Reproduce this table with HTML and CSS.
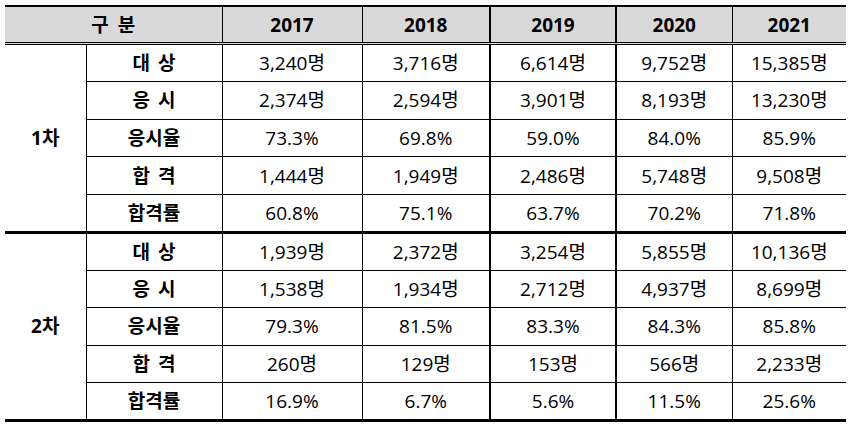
FILE: index.html
```html
<!DOCTYPE html>
<html lang="ko">
<head>
<meta charset="utf-8">
<link rel="stylesheet" href="styles.css">
</head>
<body>
<table class="stats">
  <colgroup>
    <col class="c-group"><col class="c-label"><col class="c-y1"><col class="c-y2"><col class="c-y3"><col class="c-y4"><col class="c-y5">
  </colgroup>
  <thead>
    <tr>
      <th colspan="2">구 분</th>
      <th>2017</th><th>2018</th><th class="thick">2019</th><th class="thick">2020</th><th>2021</th>
    </tr>
  </thead>
  <tbody class="g1">
    <tr><th rowspan="5" class="group">1차</th><th class="lab">대 상</th><td>3,240명</td><td>3,716명</td><td class="thick">6,614명</td><td class="thick">9,752명</td><td>15,385명</td></tr>
    <tr><th class="lab">응 시</th><td>2,374명</td><td>2,594명</td><td class="thick">3,901명</td><td class="thick">8,193명</td><td>13,230명</td></tr>
    <tr><th class="lab">응시율</th><td>73.3%</td><td>69.8%</td><td class="thick">59.0%</td><td class="thick">84.0%</td><td>85.9%</td></tr>
    <tr><th class="lab">합 격</th><td>1,444명</td><td>1,949명</td><td class="thick">2,486명</td><td class="thick">5,748명</td><td>9,508명</td></tr>
    <tr><th class="lab">합격률</th><td>60.8%</td><td>75.1%</td><td class="thick">63.7%</td><td class="thick">70.2%</td><td>71.8%</td></tr>
  </tbody>
  <tbody class="g2">
    <tr><th rowspan="5" class="group">2차</th><th class="lab">대 상</th><td>1,939명</td><td>2,372명</td><td class="thick">3,254명</td><td class="thick">5,855명</td><td>10,136명</td></tr>
    <tr><th class="lab">응 시</th><td>1,538명</td><td>1,934명</td><td class="thick">2,712명</td><td class="thick">4,937명</td><td>8,699명</td></tr>
    <tr><th class="lab">응시율</th><td>79.3%</td><td>81.5%</td><td class="thick">83.3%</td><td class="thick">84.3%</td><td>85.8%</td></tr>
    <tr><th class="lab">합 격</th><td>260명</td><td>129명</td><td class="thick">153명</td><td class="thick">566명</td><td>2,233명</td></tr>
    <tr><th class="lab">합격률</th><td>16.9%</td><td>6.7%</td><td class="thick">5.6%</td><td class="thick">11.5%</td><td>25.6%</td></tr>
  </tbody>
</table>
</body>
</html>
```

FILE: styles.css
```css
html, body {
  margin: 0;
  padding: 0;
  background: #ffffff;
}
body {
  padding: 5px;
  font-family: "Open Sans", "Noto Sans CJK KR", sans-serif;
  color: #000;
}
.stats {
  border-collapse: collapse;
  width: 841px;
  table-layout: fixed;
  font-size: 19px;
}
.c-group { width: 81px; }
.c-label { width: 136px; }
.c-y1 { width: 140px; }
.c-y2 { width: 128px; }
.c-y3 { width: 126px; }
.c-y4 { width: 116px; }
.c-y5 { width: 114px; }

.stats th, .stats td {
  padding: 0;
  text-align: center;
  vertical-align: middle;
  border-left: 1px solid #000;
  line-height: 22px;
}
.stats thead th {
  background: #d9d9d9;
  font-weight: 700;
  height: 35px;
  border-top: 2px solid #000;
  border-bottom: 3px double #000;
}
.stats thead th:first-child {
  border-left: none;
  word-spacing: 4px;
}
.stats .thick { border-left: 2px solid #000; }
.stats tbody td, .stats tbody .lab {
  border-bottom: 1px solid #000;
  font-weight: 400;
}
.stats tbody .lab {
  font-weight: 700;
  word-spacing: 3px;
}
.stats .group {
  border-left: none;
  font-weight: 700;
  border-bottom: 3px solid #000;
}
.g1 tr { height: 37.8px; }
.g2 tr { height: 37.6px; }
.g1 tr:last-child td, .g1 tr:last-child th { border-bottom: 3px solid #000; }
.g2 tr:last-child td, .g2 tr:last-child th { border-bottom: 3px solid #000; }
```
